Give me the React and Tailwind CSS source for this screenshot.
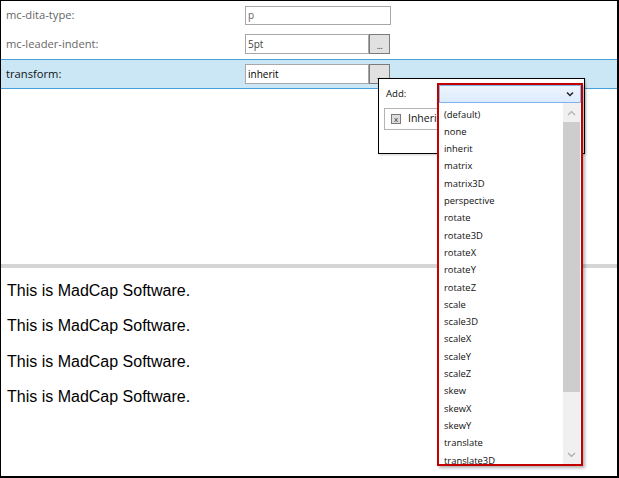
import React from "react";

const items = [
  "(default)", "none", "inherit", "matrix", "matrix3D", "perspective", "rotate", "rotate3D",
  "rotateX", "rotateY", "rotateZ", "scale", "scale3D", "scaleX", "scaleY", "scaleZ",
  "skew", "skewX", "skewY", "translate", "translate3D",
];

function DotsButton() {
  return (
    <div className="w-[21px] h-[20px] bg-[#e1e1e1] border border-[#7a7a7a] flex items-end justify-center text-[9px] leading-[14px] text-[#333] tracking-[-0.5px]">
      ...
    </div>
  );
}

export default function App() {
  return (
    <div className="relative w-[619px] h-[478px] bg-white border-t border-l border-r-2 border-b-2 border-black overflow-hidden font-['Open_Sans',sans-serif]">
      {/* property rows */}
      <div className="flex flex-col">
        <div className="flex items-center h-[28px]">
          <div className="w-[244px] pl-[5px] text-[11.2px] text-[#666]">mc-dita-type:</div>
          <div className="w-[146px] h-[19px] border border-[#a8a8a8] flex items-center pl-[2px] text-[10px] text-[#666]">p</div>
        </div>
        <div className="flex items-center h-[30px]">
          <div className="w-[244px] pl-[5px] text-[11.2px] text-[#666]">mc-leader-indent:</div>
          <div className="w-[124px] h-[20px] border border-[#a8a8a8] flex items-center pl-[2px] text-[10px] text-[#444]">5pt</div>
          <DotsButton />
        </div>
        <div className="flex items-center h-[30px] bg-[#cbe7f6] border-y border-[#47a0dc]">
          <div className="w-[244px] pl-[5px] text-[11.2px] text-[#111]">transform:</div>
          <div className="w-[124px] h-[20px] border border-[#a8a8a8] bg-white flex items-center pl-[2px] text-[10px] text-black">inherit</div>
          <DotsButton />
        </div>
      </div>

      {/* separator */}
      <div className="mt-[175px] h-[4px] bg-[#d5d5d5]" />

      {/* document content */}
      <div className="pt-[5px] pl-[6px] font-['Liberation_Sans',Arial,sans-serif] text-[16px] text-black">
        <p className="leading-[35.3px]">This is MadCap Software.</p>
        <p className="leading-[35.3px]">This is MadCap Software.</p>
        <p className="leading-[35.3px]">This is MadCap Software.</p>
        <p className="leading-[35.3px]">This is MadCap Software.</p>
      </div>

      {/* popup */}
      <div className="absolute left-[377px] top-[77px] w-[207px] h-[76px] bg-white border border-black shadow-[1px_1px_2px_rgba(0,0,0,0.2)]">
        <div className="pl-[7px] pt-[6px] text-[9.6px] leading-[17px] text-[#111]">Add:</div>
        <div className="ml-[5px] mt-[6px] w-[120px] h-[22px] border border-[#b4b4b4] flex items-center pl-[6px] gap-[7px]">
          <div className="w-[10px] h-[10px] bg-[#dedede] border border-[#7a7a7a] flex items-center justify-center text-[8px] leading-none text-[#333]">x</div>
          <span className="text-[10.5px] text-[#111]">Inherit</span>
        </div>
      </div>

      {/* dropdown */}
      <div className="absolute left-[436px] top-[82px] w-[146px] h-[383px] border-2 border-[#c40000] bg-white shadow-[2px_2px_3px_rgba(0,0,0,0.3)] flex flex-col">
        <div className="h-[18px] border border-[#7eb4ea] bg-gradient-to-b from-[#eef5fd] to-[#dcebfc] flex items-center justify-end pr-[6px]">
          <svg width="8" height="6" viewBox="0 0 8 6">
            <path d="M1 1.5 L4 4.5 L7 1.5" fill="none" stroke="#222" strokeWidth="1.5" />
          </svg>
        </div>
        <div className="flex flex-1 min-h-0">
          <div className="flex-1 overflow-hidden pt-[2.6px] pl-[5px]">
            {items.map((it) => (
              <div key={it} className="h-[17.3px] leading-[17.3px] text-[9.4px] text-[#111] whitespace-nowrap">{it}</div>
            ))}
          </div>
          <div className="w-[17px] mr-[1px] bg-[#f0f0f0] flex flex-col">
            <div className="h-[19px] flex items-center justify-center">
              <svg width="9" height="6" viewBox="0 0 9 6">
                <path d="M1 5 L4.5 1.5 L8 5" fill="none" stroke="#b0b0b0" strokeWidth="1.2" />
              </svg>
            </div>
            <div className="h-[270px] bg-[#cdcdcd]" />
            <div className="flex-1" />
            <div className="h-[19px] flex items-center justify-center">
              <svg width="9" height="6" viewBox="0 0 9 6">
                <path d="M1 1 L4.5 4.5 L8 1" fill="none" stroke="#a8a8a8" strokeWidth="1.2" />
              </svg>
            </div>
          </div>
        </div>
      </div>
    </div>
  );
}
